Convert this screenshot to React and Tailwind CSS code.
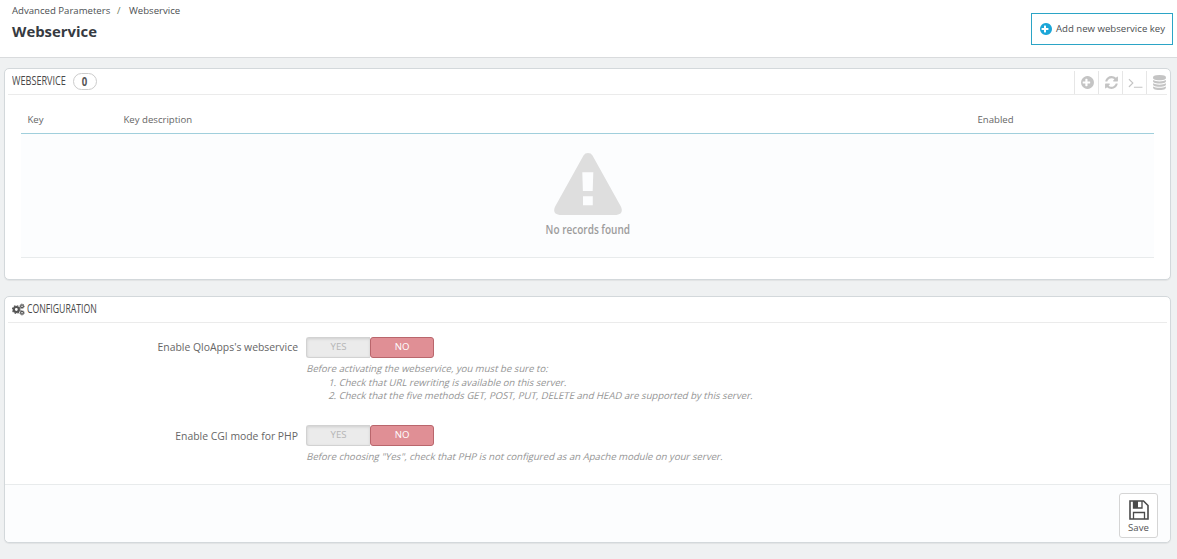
const PLUS =
  "M1216 960v-128q0-26-19-45t-45-19h-256v-256q0-26-19-45t-45-19h-128q-26 0-45 19t-19 45v256h-256q-26 0-45 19t-19 45v128q0 26 19 45t45 19h256v256q0 26 19 45t45 19h128q26 0 45-19t19-45v-256h256q26 0 45-19t19-45zm448-64q0 209-103 385.5t-279.5 279.5-385.5 103-385.5-103-279.5-279.5-103-385.5 103-385.5 279.5-279.5 385.5-103 385.5 103 279.5 279.5 103 385.5z";
const REFRESH =
  "M1639 1056q0 5-1 7-64 268-268 434.5t-478 166.5q-146 0-282.5-55t-243.5-157l-129 129q-19 19-45 19t-45-19-19-45v-448q0-26 19-45t45-19h448q26 0 45 19t19 45-19 45l-137 137q71 66 161 102t187 36q134 0 250-65t186-179q11-17 53-117 8-23 30-23h192q13 0 22.5 9.5t9.5 22.5zm25-800v448q0 26-19 45t-45 19h-448q-26 0-45-19t-19-45 19-45l138-138q-148-137-349-137-134 0-250 65t-186 179q-11 17-53 117-8 23-30 23h-199q-13 0-22.5-9.5t-9.5-22.5v-7q65-268 270-434.5t480-166.5q146 0 284 55.5t245 156.5l130-129q19-19 45-19t45 19 19 45z";
const TERMINAL =
  "M649 983l-466 466q-10 10-23 10t-23-10l-50-50q-10-10-10-23t10-23l393-393-393-393q-10-10-10-23t10-23l50-50q10-10 23-10t23 10l466 466q10 10 10 23t-10 23zm1079 457v64q0 14-9 23t-23 9h-960q-14 0-23-9t-9-23v-64q0-14 9-23t23-9h960q14 0 23 9t9 23z";
const DATABASE =
  "M896 768q237 0 443-43t325-127v170q0 69-103 128t-280 93.5-385 34.5-385-34.5-280-93.5-103-128v-170q119 84 325 127t443 43zm0 768q237 0 443-43t325-127v170q0 69-103 128t-280 93.5-385 34.5-385-34.5-280-93.5-103-128v-170q119 84 325 127t443 43zm0-384q237 0 443-43t325-127v170q0 69-103 128t-280 93.5-385 34.5-385-34.5-280-93.5-103-128v-170q119 84 325 127t443 43zm0-1152q208 0 385 34.5t280 93.5 103 128v128q0 69-103 128t-280 93.5-385 34.5-385-34.5-280-93.5-103-128v-128q0-69 103-128t280-93.5 385-34.5z";

function Icon({ path, className }) {
  return (
    <svg viewBox="0 0 1792 1792" fill="currentColor" className={className}>
      <path d={path} />
    </svg>
  );
}

function Gears() {
  return (
    <svg viewBox="0 0 24 24" fill="none" stroke="currentColor" className="size-[13px] shrink-0">
      <circle cx="8" cy="12" r="4.600" strokeWidth="4" />
      <circle cx="8" cy="12" r="7" strokeWidth="2.200" strokeDasharray="3 2.500" />
      <circle cx="18.500" cy="6" r="2.600" strokeWidth="2.200" />
      <circle cx="18.500" cy="6" r="4.200" strokeWidth="1.400" strokeDasharray="1.800 1.500" />
      <circle cx="18.500" cy="18" r="2.600" strokeWidth="2.200" />
      <circle cx="18.500" cy="18" r="4.200" strokeWidth="1.400" strokeDasharray="1.800 1.500" />
    </svg>
  );
}

function Tool({ path }) {
  return (
    <button className="flex h-[23px] w-6 items-center justify-center border-l border-[#e6e6e6] pl-px text-[#c4c4c4]">
      <Icon path={path} className="size-[15px]" />
    </button>
  );
}

function Switch() {
  return (
    <div className="flex h-[21px] w-32 text-[9.6px] leading-[18px]">
      <span className="w-16 rounded-l-[3px] border border-r-0 border-[#d2d2d2] bg-[#ebebeb] text-center text-[#b5b5b5] shadow-[inset_0_1px_3px_rgba(0,0,0,0.12)]">
        YES
      </span>
      <span className="w-16 rounded-[3px] border border-[#b9666c] bg-[#e08f95] text-center text-white">NO</span>
    </div>
  );
}

function Slanted({ children }) {
  return <span className="block w-fit -skew-x-[14deg] whitespace-nowrap">{children}</span>;
}

export default function App() {
  return (
    <div className="flex h-[559px] w-[1177px] flex-col overflow-hidden bg-[#eff1f2] font-['Open_Sans',sans-serif] text-[9.6px] text-[#555]">
      <header className="flex h-[58px] shrink-0 justify-between border-b border-[#d9dbdd] bg-white pl-3 pr-1">
        <div>
          <nav className="flex h-5 items-center whitespace-nowrap pt-0.5 text-[9.6px] text-[#4c4f52]">
            <span className="w-[105px]">Advanced Parameters</span>
            <span className="w-3 text-[#6c7a58]">/</span>
            <span>Webservice</span>
          </nav>
          <h1 className="text-[14.9px] font-bold leading-[23px] text-[#363a41]">Webservice</h1>
        </div>
        <button className="mt-[13px] flex h-8 w-[142px] items-center whitespace-nowrap border border-[#2ba4c6] pl-[7px] text-[9.6px] text-[#4c4f52]">
          <Icon path={PLUS} className="mr-[3px] size-[14px] shrink-0 text-[#1ba6d8]" />
          Add new webservice key
        </button>
      </header>

      <section className="ml-1 mt-[10px] h-[212px] w-[1167px] shrink-0 rounded-[5px] border border-[#d3d8db] bg-white px-[3px] shadow-[0_1px_1px_rgba(0,0,0,0.06)]">
        <div className="flex h-[26px] items-end justify-between border-b border-[#ebebeb] pl-1">
          <div className="flex h-[25px] items-center">
            <h2 className="w-[61px] whitespace-nowrap pb-px text-[12px] font-medium text-[#484848]">
              <span className="inline-block origin-left scale-x-[0.76]">WEBSERVICE</span>
            </h2>
            <span className="flex h-[17px] w-6 items-center justify-center rounded-full border border-[#ccc] text-[12px] font-bold">
              <span className="-ml-px inline-block scale-x-[0.8]">0</span>
            </span>
          </div>
          <div className="-mr-[3px] flex">
            <Tool path={PLUS} />
            <Tool path={REFRESH} />
            <Tool path={TERMINAL} />
            <Tool path={DATABASE} />
          </div>
        </div>
        <div className="mx-[13px]">
          <div className="grid h-[39px] grid-cols-[96px_854px_1fr] items-center border-b border-[#a0cfdc] pl-[6.500px] pt-3 text-[9.6px] text-[#666]">
            <span>Key</span>
            <span>Key description</span>
            <span>Enabled</span>
          </div>
          <div className="flex h-[124px] flex-col items-center border-b border-[#e8ebec] bg-[#fcfdfe] pt-[19px]">
            <svg viewBox="0 0 68 63" preserveAspectRatio="none" className="h-[62px] w-[68px] shrink-0">
              <path
                fill="#dedede"
                fillRule="evenodd"
                d="M29.5 2.5Q31 0 34 0t4.500 2.500l28.500 52Q70 62 62.500 63H5.500Q-2 62 1 54.500ZM28.300 19.500l.6 19h9.800l.6-19ZM29 44v9h9.800v-9Z"
              />
            </svg>
            <span className="mt-[5px] inline-block scale-x-[0.77] whitespace-nowrap text-[13px] font-semibold leading-[18px] text-[#9c9c9c]">
              No records found
            </span>
          </div>
        </div>
      </section>

      <section className="ml-1 mt-4 flex h-[247px] w-[1167px] shrink-0 flex-col rounded-[5px] border border-[#d3d8db] bg-white shadow-[0_1px_1px_rgba(0,0,0,0.06)]">
        <div className="mx-[3px] flex h-[26px] shrink-0 items-center border-b border-[#ebebeb] pb-px pl-1">
          <Gears />
          <h2 className="ml-[1.500px] w-[71px] whitespace-nowrap text-[12px] font-medium text-[#484848]">
            <span className="inline-block origin-left scale-x-[0.725]">CONFIGURATION</span>
          </h2>
        </div>
        <div className="grid grow grid-cols-[293px_1fr] grid-rows-[88px_1fr] gap-x-2 pt-[14px]">
          <div className="whitespace-nowrap text-right text-[10.4px] leading-5 text-[#666]">
            Enable QloApps's webservice
          </div>
          <div>
            <Switch />
            <div className="mt-1 pl-[0.5px] text-[9.6px] leading-[14px] text-[#959595]">
              <Slanted>Before activating the webservice, you must be sure to:</Slanted>
              <ol className="list-none pl-[22px] leading-[13px]">
                <li>
                  <Slanted>1. Check that URL rewriting is available on this server.</Slanted>
                </li>
                <li>
                  <Slanted>2. Check that the five methods GET, POST, PUT, DELETE and HEAD are supported by this server.</Slanted>
                </li>
              </ol>
            </div>
          </div>
          <div className="whitespace-nowrap pt-[1px] text-right text-[10.4px] leading-5 text-[#666]">
            Enable CGI mode for PHP
          </div>
          <div>
            <Switch />
            <div className="mt-1 pl-[0.5px] text-[9.6px] leading-[14px] text-[#959595]">
              <Slanted>
                Before choosing "Yes", check that PHP is not configured as an Apache module on your server.
              </Slanted>
            </div>
          </div>
        </div>
        <footer className="flex h-[58px] shrink-0 justify-end rounded-b-[5px] border-t border-[#e8ebec] bg-[#fcfdfe] pr-3 pt-2">
          <button className="flex h-[45px] w-[39px] flex-col items-center rounded-[3px] border border-[#d5d5d5] bg-white pt-[6px] text-[9.6px] leading-[15px]">
            <svg viewBox="0 0 20 20" className="size-5 shrink-0" fill="none" stroke="#4a4a4a" strokeWidth="1.600">
              <path d="M1 1H14.500L19 5.500V19H1Z" />
              <path d="M4.500 19V12.500H15.500V19M4.500 1V8H13V1" strokeWidth="1.300" />
              <path d="M4.500 1H9V8H4.500Z" fill="#4a4a4a" stroke="none" />
            </svg>
            <span>Save</span>
          </button>
        </footer>
      </section>
    </div>
  );
}
